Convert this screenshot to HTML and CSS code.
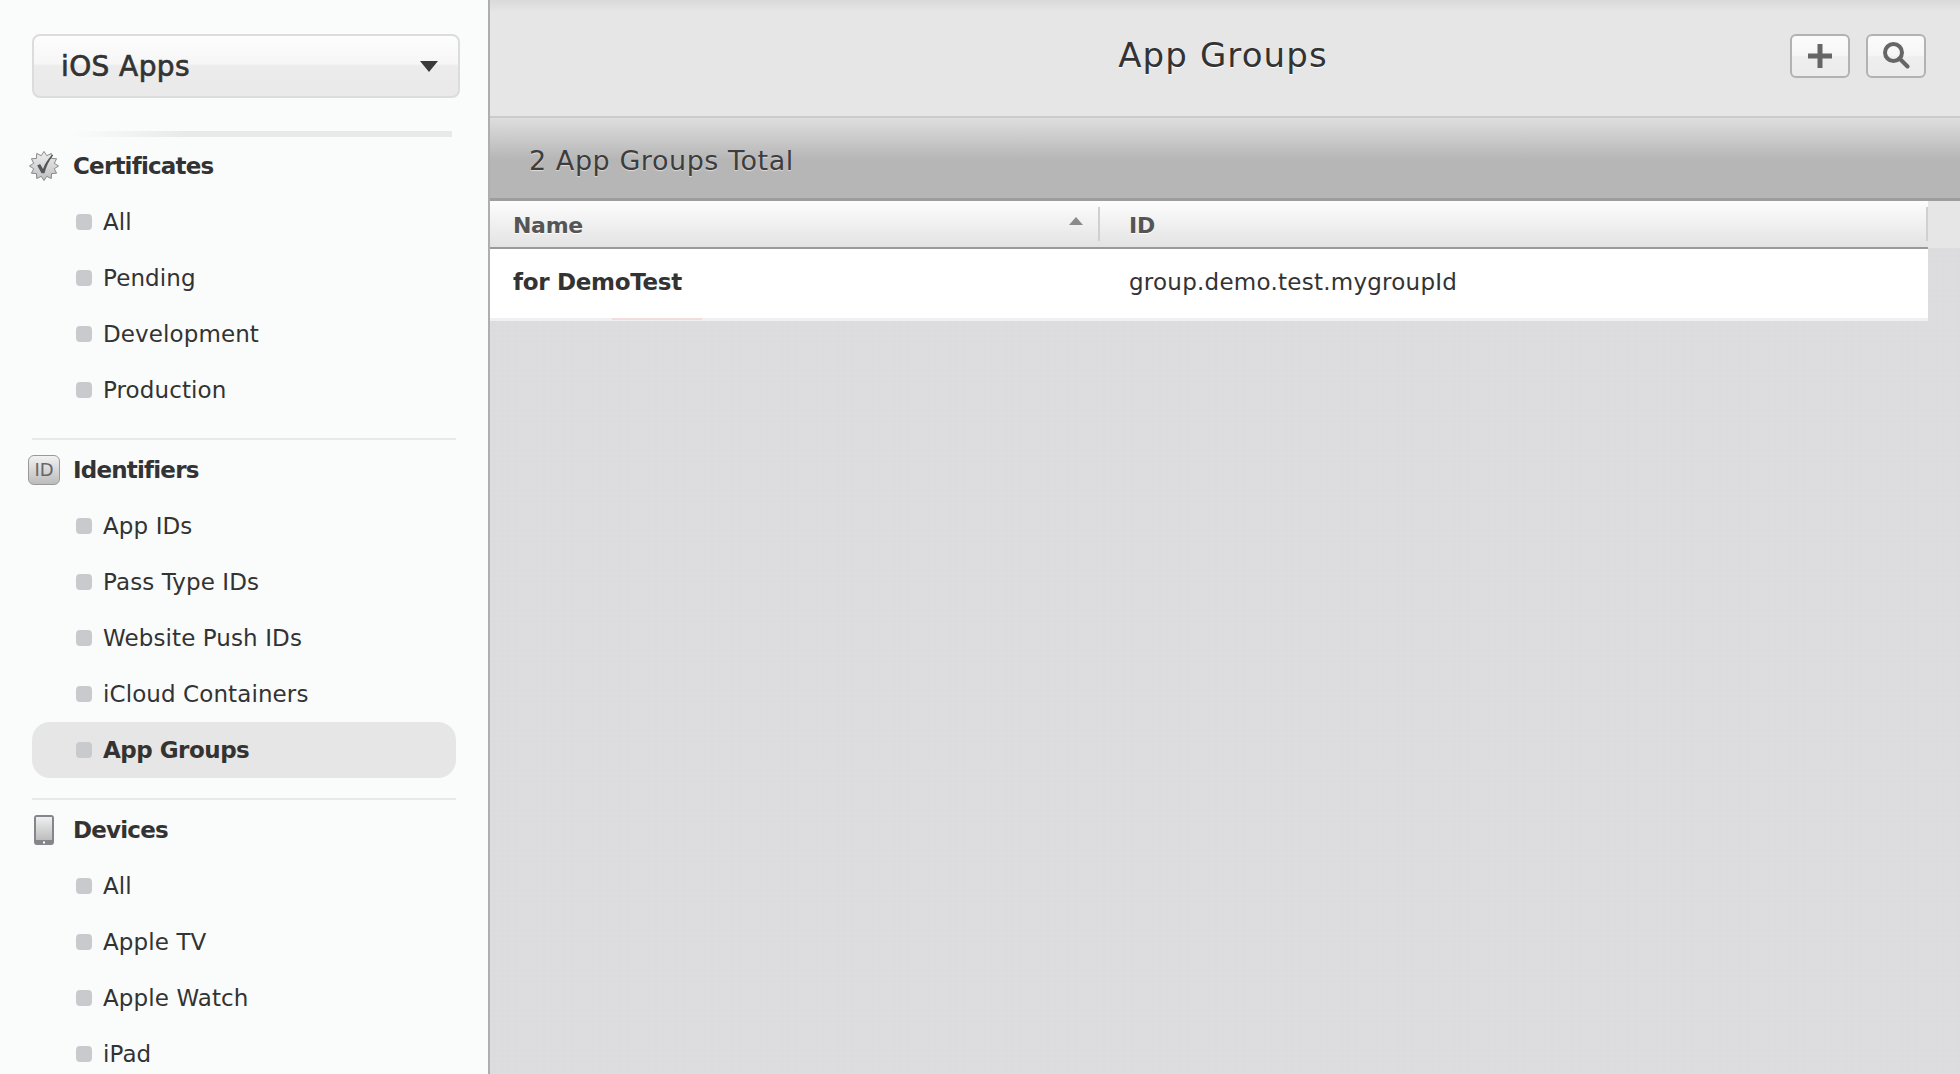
FILE: index.html
```html
<!DOCTYPE html>
<html lang="en">
<head>
    <meta charset="UTF-8">
    <meta name="viewport" content="width=device-width, initial-scale=1.0">
    <title>App Groups</title>
    <link rel="stylesheet" href="styles.css">
</head>
<body>
    <aside class="sidebar">
        <div class="platform-select">
            <span>iOS Apps</span>
            <i class="caret"></i>
        </div>
        <div class="top-rule"></div>

        <section class="nav-group">
            <h2 class="nav-title">
                <span class="nav-icon">
                    <svg width="30" height="30" viewBox="-0.5 -0.5 31 31">
                        <defs>
                            <linearGradient id="badgeFill" x1="0" y1="0" x2="0" y2="1">
                                <stop offset="0" stop-color="#efefef"/>
                                <stop offset="1" stop-color="#bfbfbf"/>
                            </linearGradient>
                        </defs>
                        <polygon points="15,0 17.85,4.37 22.5,2.01 22.78,7.22 27.99,7.5 25.63,12.15 30,15 25.63,17.85 27.99,22.5 22.78,22.78 22.5,27.99 17.85,25.63 15,30 12.15,25.63 7.5,27.99 7.22,22.78 2.01,22.5 4.37,17.85 0,15 4.37,12.15 2.01,7.5 7.22,7.22 7.5,2.01 12.15,4.37" fill="url(#badgeFill)" stroke="#858585"/>
                        <path d="M8 14.5L11 13L14 18C16 12 19 8 23.5 3L24.5 4C20 10 17.5 15.5 15.5 22.5H12.5Z" fill="#55585a"/>
                    </svg>
                </span>
                Certificates
            </h2>
            <ul class="nav-list">
                <li class="nav-item">All</li>
                <li class="nav-item">Pending</li>
                <li class="nav-item">Development</li>
                <li class="nav-item">Production</li>
            </ul>
        </section>

        <section class="nav-group">
            <h2 class="nav-title">
                <span class="nav-icon"><span class="id-badge">ID</span></span>
                Identifiers
            </h2>
            <ul class="nav-list">
                <li class="nav-item">App IDs</li>
                <li class="nav-item">Pass Type IDs</li>
                <li class="nav-item">Website Push IDs</li>
                <li class="nav-item">iCloud Containers</li>
                <li class="nav-item active">App Groups</li>
            </ul>
        </section>

        <section class="nav-group">
            <h2 class="nav-title">
                <span class="nav-icon">
                    <svg width="20" height="30" viewBox="0 0 20 30">
                        <defs>
                            <linearGradient id="screenFill" x1="0" y1="0" x2="0" y2="1">
                                <stop offset="0" stop-color="#efefef"/>
                                <stop offset="1" stop-color="#bdbdbd"/>
                            </linearGradient>
                        </defs>
                        <rect width="20" height="30" rx="3" fill="#85868b"/>
                        <rect x="2" y="2" width="16" height="23" fill="url(#screenFill)"/>
                        <rect x="9" y="26.5" width="2" height="2" fill="#fff"/>
                    </svg>
                </span>
                Devices
            </h2>
            <ul class="nav-list">
                <li class="nav-item">All</li>
                <li class="nav-item">Apple TV</li>
                <li class="nav-item">Apple Watch</li>
                <li class="nav-item">iPad</li>
            </ul>
        </section>
    </aside>

    <main class="content">
        <header class="page-header">
            <h1 class="page-title">App Groups</h1>
            <div class="toolbar">
                <button class="tool-btn" type="button" aria-label="Add">
                    <svg width="26" height="26" viewBox="0 0 26 26">
                        <path d="M1 13h24M13 1v24" stroke="#666" stroke-width="5" fill="none"/>
                    </svg>
                </button>
                <button class="tool-btn" type="button" aria-label="Search">
                    <svg class="search-icon" width="28" height="28" viewBox="0 0 28 28">
                        <circle cx="11.5" cy="11.5" r="8.5" stroke="#666" stroke-width="4" fill="none"/>
                        <path d="M17.5 17.5l8 8" stroke="#666" stroke-width="4" stroke-linecap="round" fill="none"/>
                    </svg>
                </button>
            </div>
        </header>

        <div class="total-bar">2 App Groups Total</div>

        <table class="group-table">
            <thead>
                <tr>
                    <th class="col-name">
                        <div class="th-inner">Name<i class="sort-arrow"></i></div>
                    </th>
                    <th class="col-id">
                        <div class="th-inner">ID</div>
                    </th>
                    <th class="col-rest"></th>
                </tr>
            </thead>
            <tbody>
                <tr>
                    <td class="cell-name">for DemoTest</td>
                    <td class="cell-id">group.demo.test.mygroupId</td>
                    <td class="col-rest"></td>
                </tr>
            </tbody>
        </table>
        <div class="row-mark"></div>
    </main>
</body>
</html>
```

FILE: styles.css
```css
/* General Styles */
* {
    box-sizing: border-box;
}

html, body {
    height: 100%;
}

body {
    display: flex;
    margin: 0;
    overflow: hidden;
    font-family: "DejaVu Sans", Verdana, sans-serif;
    font-size: 23px;
    color: #333;
    background: #dcdcde;
}

/* Sidebar */
.sidebar {
    flex: 0 0 490px;
    height: 1074px;
    padding: 34px 0 0 32px;
    overflow: hidden;
    background: #fafcfb;
    border-right: 2px solid #aeaeae;
}

.platform-select {
    display: flex;
    align-items: center;
    justify-content: space-between;
    width: 428px;
    height: 64px;
    padding: 0 20px 0 27px;
    font-size: 28px;
    letter-spacing: 0.4px;
    color: #333;
    -webkit-text-stroke: 0.7px #333;
    text-shadow: 0 1px 1px #fff;
    background: linear-gradient(#fdfdfd 0, #f6f6f6 46%, #ececec 50%, #e9e9e9 100%);
    border: 2px solid #dcdcdc;
    border-radius: 8px;
}

.caret {
    width: 0;
    height: 0;
    border-top: 11px solid #3a3a3a;
    border-left: 9px solid transparent;
    border-right: 9px solid transparent;
}

.top-rule {
    width: 380px;
    height: 6px;
    margin: 33px 0 1px 40px;
    background: linear-gradient(to right, #fafcfb, #e9e9e9 30%, #e9e9e9 100%);
}

.nav-group {
    width: 424px;
    padding-bottom: 20px;
    margin-bottom: 2px;
    border-bottom: 2px solid #e8e9e9;
}

.nav-group:last-child {
    border-bottom: none;
}

.nav-title {
    display: flex;
    align-items: center;
    gap: 13px;
    height: 56px;
    margin: 0 0 0 -4px;
    font-size: 23px;
    font-weight: bold;
    letter-spacing: -0.8px;
    color: #333;
}

.nav-icon {
    display: flex;
    align-items: center;
    justify-content: center;
    flex: 0 0 32px;
    height: 32px;
}

.id-badge {
    display: block;
    width: 32px;
    height: 30px;
    font-size: 18px;
    font-weight: normal;
    letter-spacing: 0;
    line-height: 28px;
    text-align: center;
    color: #666;
    background: linear-gradient(#f2f2f2, #bcbcbc);
    border: 1px solid #999;
    border-radius: 6px;
}

.nav-list {
    margin: 0;
    padding: 0;
    list-style: none;
}

.nav-item {
    display: flex;
    align-items: center;
    gap: 11px;
    height: 56px;
    padding-left: 44px;
    letter-spacing: 0.1px;
}

.nav-item::before {
    content: "";
    width: 16px;
    height: 16px;
    background: #c9cacd;
    border-radius: 4px;
}

.nav-item.active {
    font-weight: bold;
    letter-spacing: -0.5px;
    background: #e6e6e6;
    border-radius: 18px;
}

/* Main area */
.content {
    position: relative;
    flex: 1;
    min-width: 0;
    background-color: #dcdcde;
    background-image:
        repeating-linear-gradient(0deg, rgba(255, 255, 255, 0.035) 0 1px, transparent 1px 5px),
        repeating-linear-gradient(90deg, rgba(255, 255, 255, 0.02) 0 2px, transparent 2px 7px);
}

.page-header {
    display: grid;
    grid-template-columns: 1fr auto 1fr;
    align-items: center;
    height: 118px;
    padding: 0 34px 4px 30px;
    background: linear-gradient(#dadada 0, #e6e6e6 12px);
    border-bottom: 2px solid #cbcbcb;
}

.page-title {
    grid-column: 2;
    margin: 0 0 2px;
    font-size: 34px;
    font-weight: normal;
    letter-spacing: 1.1px;
    color: #333;
    text-shadow: 0 1px 1px #fff;
}

.toolbar {
    grid-column: 3;
    display: flex;
    justify-content: flex-end;
    gap: 16px;
}

.tool-btn {
    display: flex;
    align-items: center;
    justify-content: center;
    width: 60px;
    height: 44px;
    padding: 0;
    background: linear-gradient(#fbfbfb 0, #f6f6f6 48%, #eeeeee 52%, #ececec 100%);
    border: 2px solid #b2b2b2;
    border-radius: 6px;
}

.search-icon {
    margin-bottom: 3px;
}

.total-bar {
    display: flex;
    align-items: center;
    height: 83px;
    padding: 5px 0 0 39px;
    font-size: 27px;
    letter-spacing: 0.55px;
    color: #3d3d3d;
    text-shadow: 0 1px 1px #ddd;
    background: linear-gradient(#dedede 0, #b6b6b6 52%, #b6b6b6 100%);
    border-bottom: 3px solid #9d9d9d;
}

.group-table {
    width: 100%;
    border-collapse: collapse;
    table-layout: fixed;
}

.group-table th {
    height: 47px;
    padding: 5px 0;
    font-size: 22px;
    letter-spacing: -0.3px;
    text-align: left;
    color: #555;
    text-shadow: 0 1px 0 #fff;
    background: linear-gradient(#fdfdfd, #e3e3e3);
    border-bottom: 2px solid #9a9a9a;
}

.col-name {
    width: 610px;
}

.th-inner {
    display: flex;
    align-items: center;
    justify-content: space-between;
    height: 34px;
    padding: 3px 15px 0 23px;
    border-right: 2px solid #d0d0d0;
}

.col-id .th-inner {
    padding-left: 29px;
}

.sort-arrow {
    width: 0;
    height: 0;
    margin-bottom: 9px;
    border-bottom: 8px solid #8a8a8a;
    border-left: 7px solid transparent;
    border-right: 7px solid transparent;
}

.group-table .col-rest {
    width: 32px;
    border: none;
}

.group-table th.col-rest {
    background: #e6e6e6;
    border: none;
}

.group-table td {
    height: 71px;
    padding: 0 0 3px;
    background: #fff;
    border-bottom: 3px solid #eef0f4;
}

.group-table td.col-rest {
    background: transparent;
    border-bottom: none;
}

.group-table .cell-name {
    padding-left: 23px;
    font-weight: bold;
    letter-spacing: -0.3px;
}

.group-table .cell-id {
    padding-left: 29px;
    letter-spacing: 0.25px;
}

/* faint pink line under the row */
.row-mark {
    position: absolute;
    top: 318px;
    left: 122px;
    width: 90px;
    height: 2px;
    background: #f3dcdc;
}
```
